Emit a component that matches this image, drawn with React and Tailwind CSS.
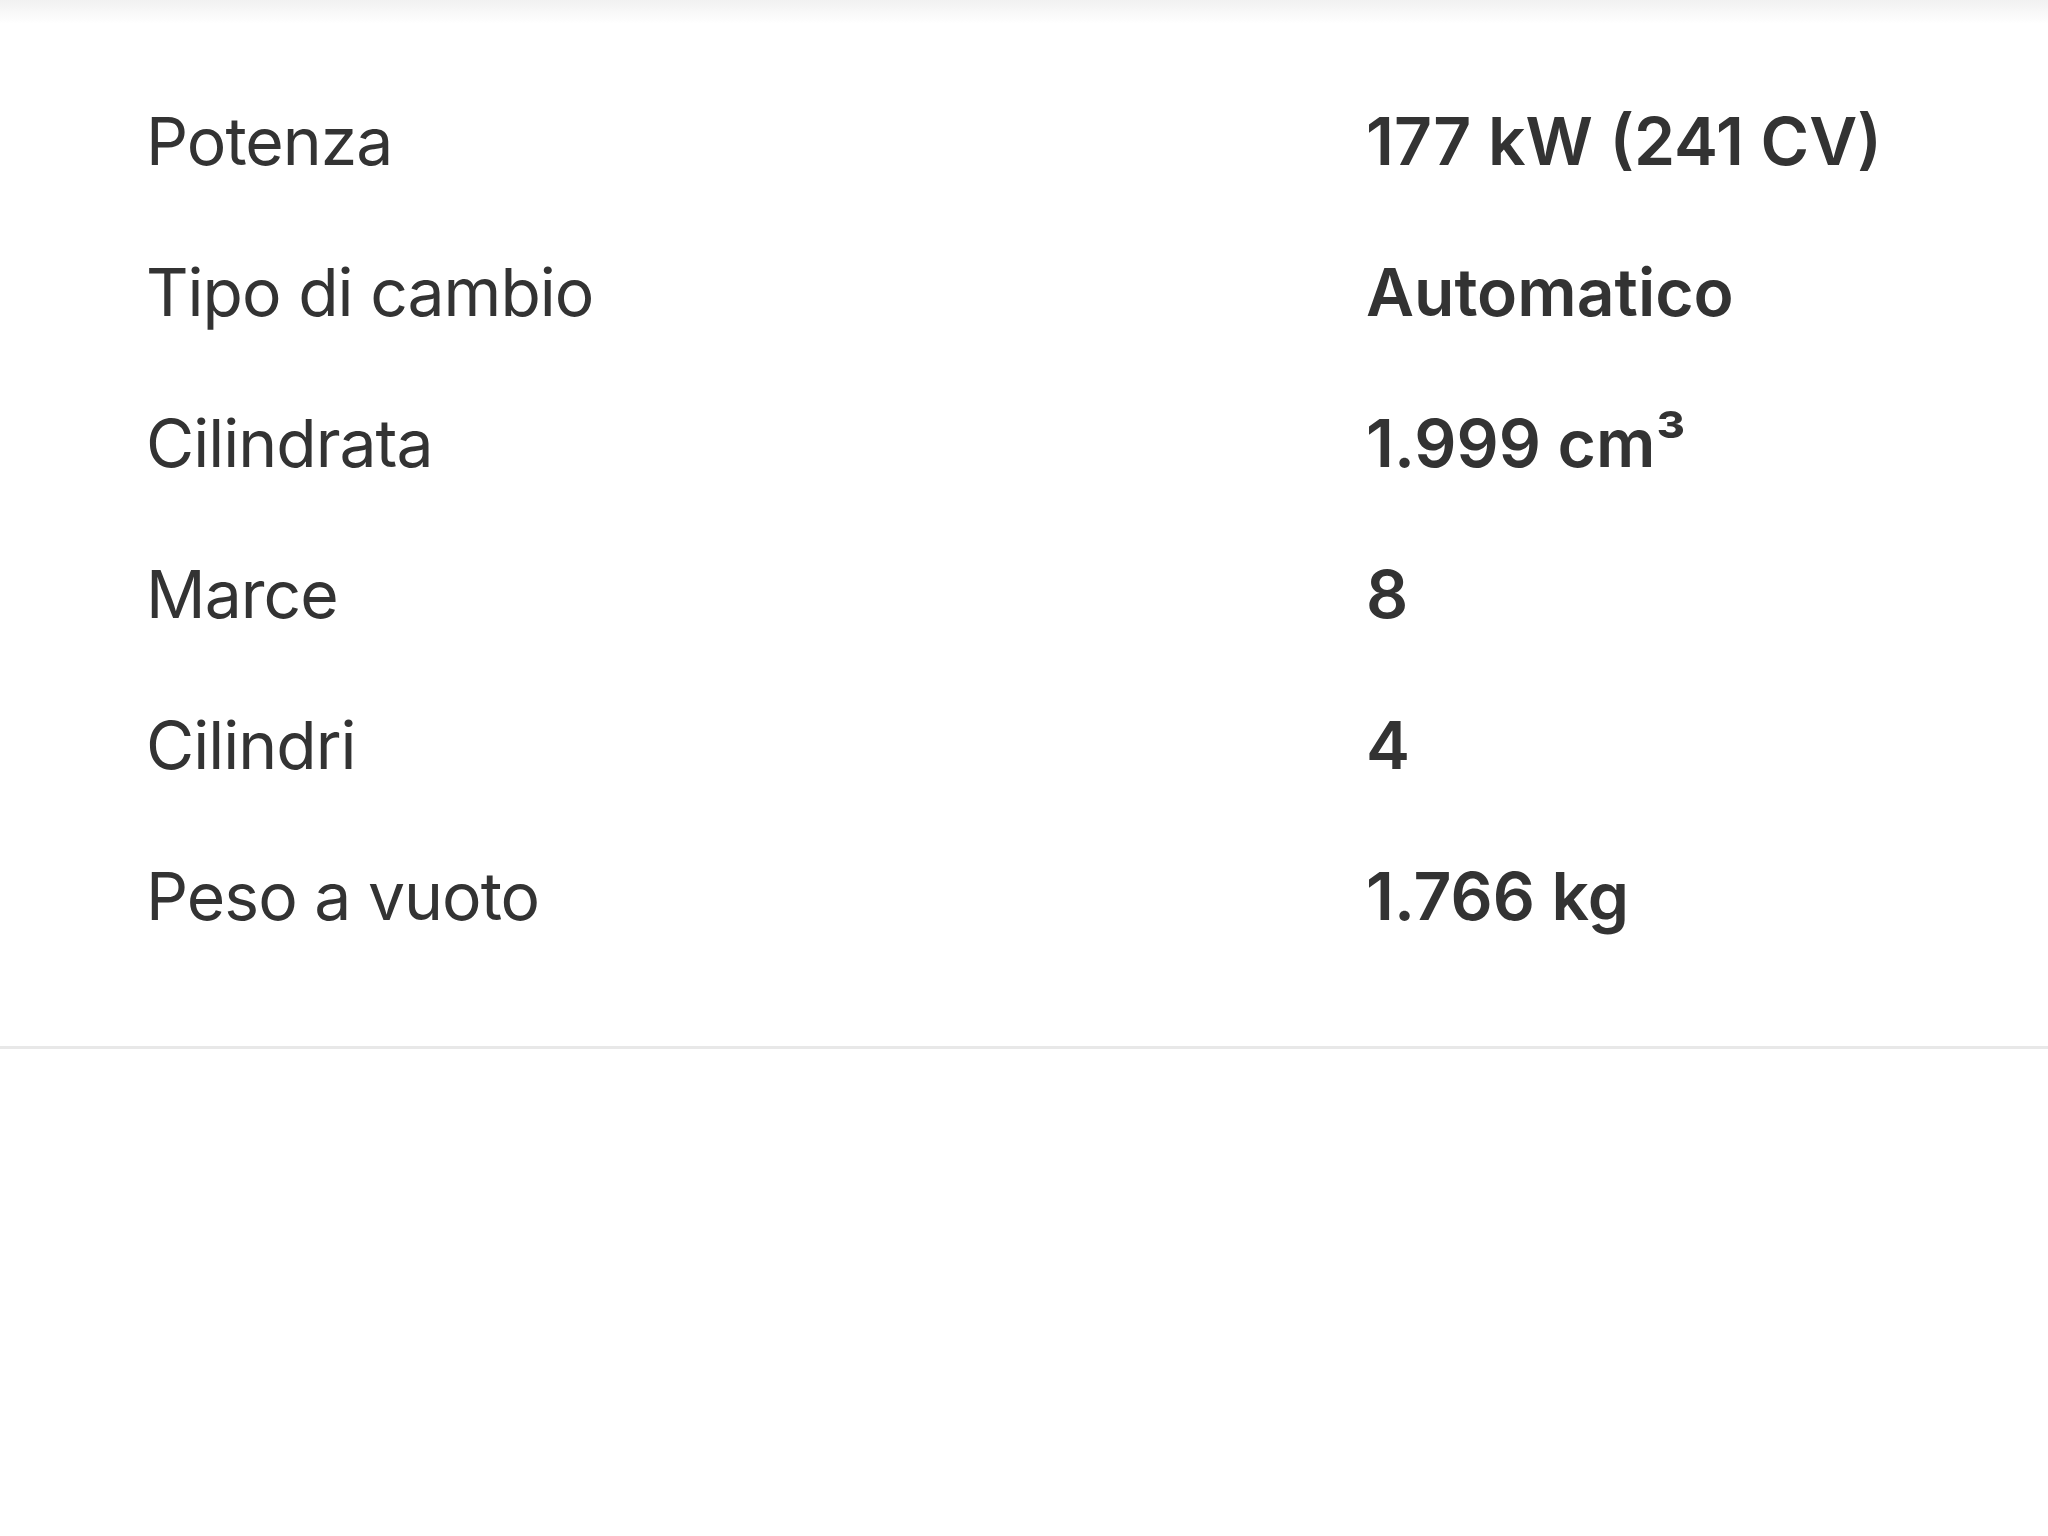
const SPECS = [
  ['Potenza', '177 kW (241 CV)'],
  ['Tipo di cambio', 'Automatico'],
  ['Cilindrata', '1.999 cm³'],
  ['Marce', '8'],
  ['Cilindri', '4'],
  ['Peso a vuoto', '1.766 kg'],
];

export default function App() {
  return (
    <div className="min-h-screen bg-white text-[#333333]" style={{ fontFamily: 'Inter, "Noto Sans", sans-serif' }}>
      {/* top edge shadow */}
      <div className="h-[24px] bg-gradient-to-b from-[#f1f1f1] to-white" />
      <div className="pt-[42px] pb-[74px] pl-[146px]">
        {SPECS.map(([label, value]) => (
          <div key={label} className="grid grid-cols-[1220px_1fr] h-[151px] items-center text-[66px] leading-[151px]">
            <span className="font-normal tracking-[-0.015em]">{label}</span>
            <span className="font-semibold">{value}</span>
          </div>
        ))}
      </div>
      <div className="h-[3px] bg-[#e8e8e8]" />
    </div>
  );
}
